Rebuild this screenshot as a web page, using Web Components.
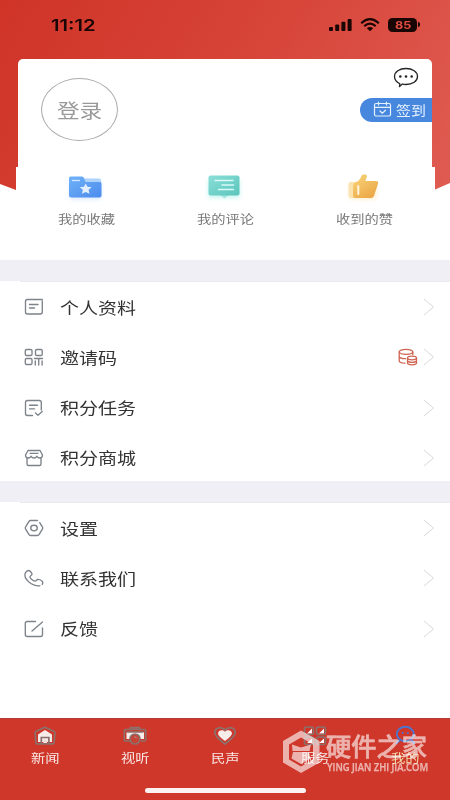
<!DOCTYPE html>
<html lang="zh-CN">
<head>
<meta charset="utf-8">
<title>我的</title>
<style>
html,body{margin:0;height:100%}
body{background:#fff;font-family:"Noto Sans CJK SC","Noto Sans",sans-serif;overflow:hidden}
</style>
</head>
<body>
<profile-page></profile-page>
<script>
const icons = {
  star: ['0 0 36 30', `<defs><linearGradient id="g" x2="1" y2="1"><stop stop-color="#70b2f8"/><stop offset="1" stop-color="#4b8bed"/></linearGradient><filter id="b" x="-30%" y="-30%" width="160%" height="180%"><feGaussianBlur stdDeviation="2"/></filter></defs><rect x="3" y="8" width="31" height="18" rx="2" fill="#b9d5ff" opacity=".6" filter="url(#b)"/><path d="M16 5.500h16q2 0 2 2v9H16z" fill="#add2fb"/><path d="M2.500 3.500h12.500q1.500 0 2 1.500l1.500 4H33q1.500 0 1.500 1.500v12q0 2-2 2H4q-2 0-2-2V5q0-1.500 1.500-1.500z" fill="url(#g)"/><path d="M5 7.500h8" stroke="#d3e8ff" stroke-width="1.300"/><path d="M18.700 10.500l1.700 3.300 4.300.5-3.100 2.500.8 3.900-3.700-1.800-3.700 1.800.8-3.900-3.100-2.500 4.300-.5z" fill="#e3f0ff"/>`],
  comment: ['0 0 36 30', `<defs><linearGradient id="g" x2="1" y2="1"><stop stop-color="#8adfd8"/><stop offset="1" stop-color="#5bc5bd"/></linearGradient><filter id="b" x="-30%" y="-30%" width="160%" height="180%"><feGaussianBlur stdDeviation="2"/></filter></defs><rect x="2" y="7" width="32" height="18" fill="#a5eee5" opacity=".55" filter="url(#b)"/><path d="M14 22h9l-4.500 3.500z" fill="#a6e4df"/><rect x="2.500" y="2.500" width="31" height="20" rx="2" fill="url(#g)"/><path d="M9 7.500h18M16 12h11.500M12.500 16.500h15" stroke="#d9fbf7" stroke-width="1.500" stroke-linecap="round"/>`],
  thumb: ['0 0 36 30', `<defs><linearGradient id="g" x2=".7" y2="1"><stop stop-color="#f8d77d"/><stop offset="1" stop-color="#eca746"/></linearGradient><filter id="b" x="-30%" y="-30%" width="160%" height="180%"><feGaussianBlur stdDeviation="2"/></filter></defs><rect x="5" y="12" width="26" height="14" fill="#ffdc94" opacity=".5" filter="url(#b)"/><rect x="3.500" y="9" width="9" height="16" rx="2" fill="#fbe3b0"/><path d="M8 13q0-3 3-4 3-1 4.500-4l1-2.300q.6-1.200 2-1.200h1.500q2.600 0 1.800 2.500L20.300 8H31q2.800 0 2 2.700l-4 12q-.7 2.300-3 2.300H10q-2 0-2-2z" fill="url(#g)"/><path d="M13.300 13v8" stroke="#fff5dd" stroke-width="2" stroke-linecap="round"/>`],
  chat: ['0 0 26 22', `<path d="M6.800 16.800C3.500 15 1.500 12.500 1.500 9.500c0-4.600 5-8 11.500-8s11.500 3.400 11.500 8-5 8-11.500 8c-1.300 0-2.500-.1-3.600-.5L6.500 19.500z" fill="none" stroke="#242424" stroke-width="1.300" stroke-linejoin="round"/><g fill="#242424"><circle cx="7.300" cy="9.500" r="1.300"/><circle cx="13" cy="9.500" r="1.300"/><circle cx="18.700" cy="9.500" r="1.300"/></g>`],
  calendar: ['0 0 19 17', `<g fill="none" stroke="#e7f2ff" stroke-width="1.200" stroke-linecap="round" stroke-linejoin="round"><rect x="1.500" y="2.500" width="16" height="12.500" rx="1.500"/><path d="M1.500 6.300h16M5.500 1v3M13.500 1v3M7 10l2.300 2.200 3.200-3"/></g>`],
  signal: ['0 0 24 14', `<rect x="0" y="9" width="4" height="4" rx="1"/><rect x="6.200" y="6.500" width="4" height="6.500" rx="1"/><rect x="12.400" y="3.800" width="4" height="9.200" rx="1"/><rect x="18.600" y="1" width="4" height="12" rx="1"/>`],
  wifi: ['0 0 20 14', `<path d="M1.200 5.200Q10-2.800 18.800 5.200M4.300 8.100q5.700-4.800 11.400 0" fill="none" stroke="#190504" stroke-width="2.200"/><path d="M6.800 10.300q3.200-2.400 6.400 0L10 13.300z"/>`],
  doc: ['0 0 20 18', `<path d="M14.500 1.500H3.500Q1.500 1.500 1.500 3.500v10.500Q1.500 16 3.500 16h12.800q2 0 2-2V3M14.500 1.500h3.800M5.500 6.500h8.500M5.500 10h5"/>`],
  qr: ['0 0 20 18', `<rect x="1.300" y="1.500" width="6.700" height="6" rx="1.300"/><rect x="11.500" y="1.500" width="6.700" height="6" rx="1.300"/><rect x="1.300" y="10.500" width="6.700" height="6" rx="1.300"/><path d="M10.500 10.500h8M11.300 13v4M14.700 11v6M18.100 13v4"/>`],
  task: ['0 0 20 18', `<path d="M8.500 16.500H3.500q-2 0-2-2V3.500q0-2 2-2h11.800q2 0 2 2v7.500M5.500 6.200h8M5.500 9.800h5M11.500 14l2.500 2.200 4.200-3.700"/>`],
  shop: ['0 0 20 18', `<path d="M4 1.500h12l2.500 4.500q0 3-2.700 3-2 0-2.900-1.800-.9 1.800-2.900 1.800t-2.900-1.800Q6.200 9 4.200 9 1.500 9 1.500 6zM3 9.200V15q0 1.500 1.500 1.500h11q1.500 0 1.500-1.500V9.200M6 4.300h8"/>`],
  gear: ['0 0 20 18', `<path d="M13.500 1.500h-7q-1 0-1.500.8L1.500 8.200q-.5.800 0 1.600L5 15.700q.5.800 1.500.8h7q1 0 1.500-.8l3.500-5.900q.5-.8 0-1.600L15.700 3.600"/><ellipse cx="10" cy="9" rx="3.300" ry="2.800"/>`],
  phone: ['0 0 20 18', `<path d="M15.800 16.800C8.500 17.500-1 10 1.200 4.300c.6-1.500 2-2.700 3.200-2.800C5.700 1.400 7.800 3.600 8 4.900c.2 1.500-2 1.700-2 3 0 1.700 3 4 5 4.200 1.500.1 1.700-2 3.300-1.800 2 .2 4.500 2 4.500 3.400 0 .6-.3 1.200-.6 1.700"/>`],
  edit: ['0 0 20 18', `<path d="M11.500 1.500H3.300q-2 0-2 2v11q0 2 2 2h13.200q2 0 2-2V8M8 11L18.500 2"/>`],
  coins: ['0 0 20 18', `<g fill="none" stroke="#cf6551" stroke-width="1.300"><ellipse cx="8" cy="3.800" rx="6.800" ry="2.500"/><path d="M1.200 3.800v9q0 2.300 6.300 2.500M14.800 3.800v3.500M1.200 8.300q.3 2.300 6.800 2.300"/><ellipse cx="14" cy="10" rx="4.500" ry="1.800"/><path d="M9.500 10v5q0 1.800 4.500 1.800t4.500-1.800v-5M9.500 12.700q.5 1.600 4.500 1.600t4.500-1.600"/></g>`],
  arrow: ['0 0 12 18', `<path d="M1 1l9.500 8L1 17" stroke="#d9d9db" stroke-width="1" fill="none"/>`],
  home: ['0 0 24 20', `<path d="M5 8.500L12 4l7 4.500V16H5z" fill="#f6ecea"/><path d="M12 1.300l8.800 3.900q1.200.5 1.100 1.700l-.8 9.300q-.1 1.700-1.600 1.700H4.500q-1.500 0-1.600-1.700l-.8-9.300Q2 5.700 3.200 5.200zM8.300 17.600v-6.100h7.600v6.100" fill="none" stroke="#8b706c" stroke-width="1.700"/><path d="M10.200 13.500h3.800v3.500h-3.800z" fill="#f0ded9"/>`],
  camera: ['0 0 24 20', `<rect x="3.500" y="6" width="17.500" height="7" fill="#f6ecea"/><path d="M7 15H3q-1.700 0-1.700-1.500V4.800Q1.300 3.500 2.800 3.500h18.400q1.500 0 1.500 1.300v8.700q0 1.500-1.700 1.500H18M7.500 3.500V1.700h9v1.800M3.500 6h17" fill="none" stroke="#8b706c" stroke-width="1.700"/><circle cx="12" cy="13" r="5" fill="#c54436" stroke="#8b706c" stroke-width="1.700"/><path d="M11 11q2.300-.5 3 1.500" stroke="#b98983" fill="none"/>`],
  heart: ['0 0 24 20', `<path d="M12 15Q5 10 5 7.500C5.500 4 9.500 3.300 12 5.800 14.500 3.300 18.500 4.200 19 7.500 19 10 12 15 12 15z" fill="#f6ecea"/><path d="M12 4Q9.500 1.500 6.500 1.600 2 2.300 1.700 6.500 2 10.500 12 18q10-7.500 10.300-11.500-.3-4.200-4.800-4.900Q14.500 1.500 12 4z" fill="none" stroke="#8b706c" stroke-width="1.800"/>`],
  grid: ['0 0 24 20', `<path d="M4 7.500l5-5v5zM16 7.500l5-5v5zM4 17l5-4.500V17zM16 17l5-4.500V17z" fill="#fff"/><g fill="none" stroke="#8b706c" stroke-width="1.600"><rect x="1.500" y="1" width="9" height="7.500" rx="2"/><rect x="13.500" y="1" width="9" height="7.500" rx="2"/><rect x="1.500" y="11" width="9" height="7.500" rx="2"/><rect x="13.500" y="11" width="9" height="7.500" rx="2"/></g>`],
  user: ['0 0 24 20', `<g fill="none" stroke="#4f74cc" stroke-width="1.900"><ellipse cx="12.300" cy="8" rx="8.500" ry="7.200"/><path d="M7 14.500q-3 .8-3.500 3.500M17.800 14.500q3 .8 3.500 3.500"/></g><circle cx="9.800" cy="7" r="1.100" fill="#4f74cc"/><circle cx="14.800" cy="7" r="1.100" fill="#4f74cc"/>`],
  cube: ['0 0 44 46', `<path fill-rule="evenodd" d="M22 1.500L40.500 12v21.500L22 44 4 33.500V12zM22 8.500L10 15.500v15L22 37.500l12-7v-15z"/><path d="M13 15.500l9 3 10-3-1.500 6.500h-17zM14 23h16l1.500 6.500L22 35l-9.500-5.500z"/>`]
};

const define = (tag, css, html, setup) => customElements.define(tag, class extends HTMLElement {
  connectedCallback() {
    if (this.shadowRoot) return;
    const root = this.attachShadow({mode: 'open'});
    root.innerHTML = `<style>${css}</style>` + (typeof html === 'function' ? html(this) : html);
    if (setup) setup(this, root);
  }
});

define('line-icon', `:host{display:block;flex:none}svg{display:block;width:100%;height:100%;overflow:visible}`,
  el => `<svg viewBox="${icons[el.getAttribute('name')][0]}" preserveAspectRatio="none">${icons[el.getAttribute('name')][1]}</svg>`);

/* Text set wider than its natural proportions; "w" is the width of the box it fills. */
define('wide-text', `:host{display:block;flex:none;white-space:nowrap}span{display:inline-block;transform-origin:0 50%}`,
  `<span><slot></slot></span>`, (el, root) => {
    el.style.width = el.getAttribute('w') + 'px';
    root.querySelector('span').style.transform = `scaleX(${el.getAttribute('s') || 1.19})`;
  });

define('status-bar', `:host{display:flex;align-items:center;height:49px;padding:0 30px 0 51px;box-sizing:border-box;color:#190504;fill:#190504;font-family:Inter,sans-serif}
.time{font-size:16px;font-weight:600;margin-right:auto;line-height:50px}
.battery{display:flex;align-items:center;justify-content:center;width:29px;height:14px;border-radius:4.500px;background:#190504;color:#df4d42;font-size:11px;font-weight:700;line-height:14px}
.tip{width:2px;height:5px;background:#190504;border-radius:0 2px 2px 0;margin-left:1px}`,
`<wide-text class="time" w="46" s="1.26">11:12</wide-text>
<line-icon name="signal" style="width:24px;height:14px"></line-icon>
<line-icon name="wifi" style="width:20px;height:14px;margin:0 8px 0 7px"></line-icon>
<div class="battery"><wide-text w="16" s="1.15">85</wide-text></div><div class="tip"></div>`);

define('login-card', `:host{display:flex;justify-content:space-between;margin:10px 18px 0;height:108px;background:#fff;border-radius:5px 5px 0 0}
.login{box-sizing:border-box;width:77px;height:63px;margin:19px 0 0 23px;border:1px solid #aaa;border-radius:50%;display:flex;align-items:center;justify-content:center;color:#999;font-size:19px;line-height:28px}
.side{display:flex;flex-direction:column;align-items:flex-end}
.sign{display:flex;align-items:center;box-sizing:border-box;width:72px;height:24px;margin-top:8.500px;padding-left:13px;gap:4px;border-radius:12px 0 0 12px;background:#4788de;color:#e7f2ff;font-size:13px;line-height:24px}`,
`<div class="login"><wide-text w="45">登录</wide-text></div>
<div class="side"><line-icon name="chat" style="width:26px;height:22px;margin:8px 13px 0 0"></line-icon>
<div class="sign"><line-icon name="calendar" style="width:19px;height:17px"></line-icon><wide-text w="30" s="1.15">签到</wide-text></div></div>`);

define('short-cut', `:host{display:flex;flex-direction:column;align-items:center;color:#777;font-size:12px;line-height:18px}line-icon{width:36px;height:30px;margin:0 3px 7px 0}`,
  el => `<line-icon name="${el.getAttribute('icon')}"></line-icon><wide-text w="57"><slot></slot></wide-text>`);

define('profile-header', `:host{display:block;position:relative;height:260px}
.bg{position:absolute;inset:0;height:190px;background:linear-gradient(120deg,#cf3427,#d74438 50%,#df5c52);clip-path:polygon(0 0,100% 0,100% 183px,434px 190px,16px 190px,0 184px)}
.content{position:relative}
.shortcuts{display:grid;grid-template-columns:repeat(3,139px);justify-content:center;box-sizing:border-box;height:93px;margin:0 15px 0 16px;padding-top:6px;background:#fff}`,
`<div class="bg"></div><div class="content"><status-bar></status-bar><login-card></login-card>
<div class="shortcuts"><short-cut icon="star">我的收藏</short-cut><short-cut icon="comment">我的评论</short-cut><short-cut icon="thumb">收到的赞</short-cut></div></div>`);

define('section-gap', `:host{display:block;height:22px;background:linear-gradient(#e9e9ee,#e9e9ee) 20px 21px/100% 1px no-repeat,linear-gradient(#f0eff5,#f0eff5) 0 0/100% 21px no-repeat}`, ``);

define('menu-row', `:host{display:flex;align-items:center;height:50.250px;box-sizing:border-box;padding:0 15px 0 24px;color:#333;font-size:16px;line-height:24px}
.lead{width:20px;height:18px;margin-right:15.500px;fill:none;stroke:#7d838a;stroke-width:1.350;stroke-linecap:round;stroke-linejoin:round}
wide-text{margin-bottom:1px}
.end{display:flex;align-items:center;margin-left:auto;gap:5px}.arrow{width:12px;height:18px}`,
  el => `<line-icon class="lead" name="${el.getAttribute('icon')}"></line-icon><wide-text w="77"><slot></slot></wide-text><div class="end"><slot name="badge"></slot><line-icon class="arrow" name="arrow"></line-icon></div>`);

define('tab-item', `:host{display:flex;flex-direction:column;align-items:center;color:#fae8e6;font-size:12px;line-height:18px}line-icon{width:24px;height:20px;margin:7px 0 3px}`,
  el => `<line-icon name="${el.getAttribute('icon')}"></line-icon><wide-text w="29"><slot></slot></wide-text>`);

define('tab-bar', `:host{display:block;height:82px;box-sizing:border-box;background:#cf372a;border-top:1px solid #b13f35}
.tabs{display:grid;grid-template-columns:repeat(5,1fr);height:69px}
.home{width:161px;height:5px;border-radius:3px;background:#fbf2f1;margin:0 auto}`,
`<div class="tabs"><slot></slot></div><div class="home"></div>`);

define('site-mark', `:host{position:absolute;left:279px;top:729px;display:flex;align-items:flex-start;color:#fff;fill:#fff;opacity:.62}
line-icon{width:44px;height:46px}.words{display:flex;flex-direction:column;margin-left:3px}
.name{font-size:25px;line-height:32px;font-weight:500;-webkit-text-stroke:.6px #fff}.url{font:600 10px/12px "Open Sans",sans-serif;margin-left:1px;-webkit-text-stroke:.25px #fff}`,
`<line-icon name="cube"></line-icon><div class="words"><wide-text class="name" w="104" s="1.01">硬件之家</wide-text><wide-text class="url" w="104" s=".94">YING JIAN ZHI JIA.COM</wide-text></div>`);

define('profile-page', `:host{display:flex;flex-direction:column;position:relative;width:450px;height:800px;overflow:hidden;background:#fff}
.first{height:199px}.second{flex:1}tab-bar{flex:none}`,
`<profile-header></profile-header><section-gap></section-gap>
<div class="first"><menu-row icon="doc">个人资料</menu-row><menu-row icon="qr">邀请码<line-icon slot="badge" name="coins" style="width:20px;height:18px"></line-icon></menu-row><menu-row icon="task">积分任务</menu-row><menu-row icon="shop">积分商城</menu-row></div>
<section-gap></section-gap>
<div class="second"><menu-row icon="gear">设置</menu-row><menu-row icon="phone">联系我们</menu-row><menu-row icon="edit">反馈</menu-row></div>
<tab-bar><tab-item icon="home">新闻</tab-item><tab-item icon="camera">视听</tab-item><tab-item icon="heart">民声</tab-item><tab-item icon="grid">服务</tab-item><tab-item icon="user" style="color:#f3dfae">我的</tab-item></tab-bar>
<site-mark></site-mark>`);
</script>
</body>
</html>
